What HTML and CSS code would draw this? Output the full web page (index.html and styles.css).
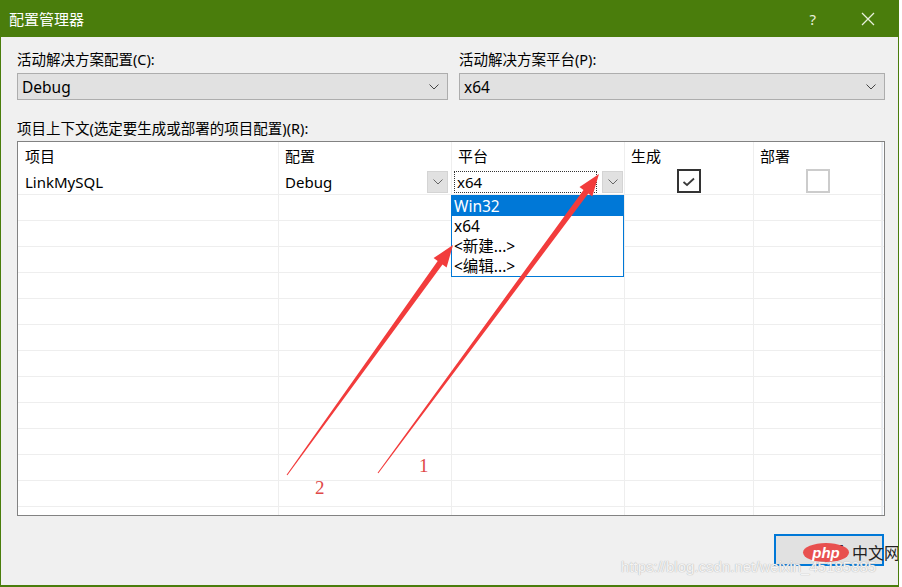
FILE: index.html
```html
<!DOCTYPE html>
<html lang="zh-CN">
<head>
    <meta charset="UTF-8">
    <title>配置管理器</title>
    <link rel="stylesheet" href="styles.css">
</head>
<body>
    <div class="window">
        <div class="titlebar">
            <span class="title">配置管理器</span>
            <span class="help">?</span>
            <svg class="close-x" width="14" height="14" viewBox="0 0 14 14">
                <path d="M1 1 L13 13 M13 1 L1 13" stroke="#e8f0dc" stroke-width="1.3" fill="none"/>
            </svg>
        </div>

        <div class="content">
            <div class="combo-row">
                <div class="field">
                    <label>活动解决方案配置(C):</label>
                    <div class="combo">
                        <span>Debug</span>
                        <svg class="chev" width="10" height="6" viewBox="0 0 10 6"><path d="M0.5 0.5 L5 5 L9.5 0.5" stroke="#444" fill="none"/></svg>
                    </div>
                </div>
                <div class="field">
                    <label>活动解决方案平台(P):</label>
                    <div class="combo">
                        <span>x64</span>
                        <svg class="chev" width="10" height="6" viewBox="0 0 10 6"><path d="M0.5 0.5 L5 5 L9.5 0.5" stroke="#444" fill="none"/></svg>
                    </div>
                </div>
            </div>

            <label class="ctx-label">项目上下文(选定要生成或部署的项目配置)(R):</label>

            <div class="grid">
                <div class="row head">
                    <div class="cell">项目</div>
                    <div class="cell">配置</div>
                    <div class="cell">平台</div>
                    <div class="cell">生成</div>
                    <div class="cell">部署</div>
                    <div class="cell edge"></div>
                </div>
                <div class="row first">
                    <div class="cell">LinkMySQL</div>
                    <div class="cell split">
                        <span>Debug</span>
                        <span class="drop-btn"><svg width="10" height="6" viewBox="0 0 10 6"><path d="M0.5 0.5 L5 5 L9.5 0.5" stroke="#666" fill="none"/></svg></span>
                    </div>
                    <div class="cell split platform">
                        <span class="focus-box">x64</span>
                        <span class="drop-btn"><svg width="10" height="6" viewBox="0 0 10 6"><path d="M0.5 0.5 L5 5 L9.5 0.5" stroke="#666" fill="none"/></svg></span>
                        <ul class="dropdown">
                            <li class="selected">Win32</li>
                            <li>x64</li>
                            <li>&lt;新建...&gt;</li>
                            <li>&lt;编辑...&gt;</li>
                        </ul>
                    </div>
                    <div class="cell center">
                        <span class="check on">
                            <svg width="20" height="20" viewBox="0 0 20 20"><path d="M4.5 11 L8 14 L15 7.5" stroke="#3a3a3a" stroke-width="1.8" fill="none"/></svg>
                        </span>
                    </div>
                    <div class="cell center"><span class="check"></span></div>
                    <div class="cell edge"></div>
                </div>
                <div class="row"><div class="cell"></div><div class="cell"></div><div class="cell"></div><div class="cell"></div><div class="cell"></div><div class="cell edge"></div></div>
                <div class="row"><div class="cell"></div><div class="cell"></div><div class="cell"></div><div class="cell"></div><div class="cell"></div><div class="cell edge"></div></div>
                <div class="row"><div class="cell"></div><div class="cell"></div><div class="cell"></div><div class="cell"></div><div class="cell"></div><div class="cell edge"></div></div>
                <div class="row"><div class="cell"></div><div class="cell"></div><div class="cell"></div><div class="cell"></div><div class="cell"></div><div class="cell edge"></div></div>
                <div class="row"><div class="cell"></div><div class="cell"></div><div class="cell"></div><div class="cell"></div><div class="cell"></div><div class="cell edge"></div></div>
                <div class="row"><div class="cell"></div><div class="cell"></div><div class="cell"></div><div class="cell"></div><div class="cell"></div><div class="cell edge"></div></div>
                <div class="row"><div class="cell"></div><div class="cell"></div><div class="cell"></div><div class="cell"></div><div class="cell"></div><div class="cell edge"></div></div>
                <div class="row"><div class="cell"></div><div class="cell"></div><div class="cell"></div><div class="cell"></div><div class="cell"></div><div class="cell edge"></div></div>
                <div class="row"><div class="cell"></div><div class="cell"></div><div class="cell"></div><div class="cell"></div><div class="cell"></div><div class="cell edge"></div></div>
                <div class="row"><div class="cell"></div><div class="cell"></div><div class="cell"></div><div class="cell"></div><div class="cell"></div><div class="cell edge"></div></div>
                <div class="row"><div class="cell"></div><div class="cell"></div><div class="cell"></div><div class="cell"></div><div class="cell"></div><div class="cell edge"></div></div>
                <div class="row"><div class="cell"></div><div class="cell"></div><div class="cell"></div><div class="cell"></div><div class="cell"></div><div class="cell edge"></div></div>
                <div class="row last"><div class="cell"></div><div class="cell"></div><div class="cell"></div><div class="cell"></div><div class="cell"></div><div class="cell edge"></div></div>
            </div>

            <div class="footer">
                <button class="btn">关闭</button>
            </div>
        </div>

        <!-- red annotation arrows drawn over the dialog -->
        <svg class="marks" width="899" height="587" viewBox="0 0 899 587">
            <polygon fill="#f23c3c" points="376.6,472.7 582.5,189.9 578.5,186.9 598,174 591.3,196.5 587.3,193.5 377.4,473.3"/>
            <polygon fill="#f23c3c" points="285.6,474.7 436.7,261.0 432.6,258.1 452,245 445.6,267.5 441.5,264.6 286.4,475.3"/>
        </svg>
        <span class="mark-num one">1</span>
        <span class="mark-num two">2</span>

        <div class="watermark">
            <span class="php">php</span>
            <span class="cn">中文网</span>
        </div>
        <div class="url">https://blog.csdn.net/weixin_45185885</div>
    </div>
</body>
</html>
```

FILE: styles.css
```css
* {
    margin: 0;
    padding: 0;
    box-sizing: border-box;
}

body {
    background: #fff;
    font-family: "Noto Sans", "Noto Sans CJK SC", sans-serif;
    color: #000;
}

.window {
    position: relative;
    width: 899px;
    height: 587px;
    background: #f0f0f0;
    border: 1px solid #4a7d0c;
    border-top: none;
    border-bottom-width: 2px;
    overflow: hidden;
}

.titlebar {
    height: 37px;
    background: #4a7d0c;
    display: flex;
    align-items: center;
    padding-left: 9px;
    margin: 0 -1px;
    color: #fff;
}

.title {
    font-size: 15px;
    flex: 1;
}

.help {
    font-size: 15px;
    color: #e8f0dc;
    margin-right: 45px;
}

.close-x {
    margin-right: 24px;
}

.content {
    padding: 12px 13px 0 16px;
}

.combo-row {
    display: flex;
    gap: 11px;
}

.field {
    flex: 1;
}

.field:first-child {
    flex: 0 0 431px;
}

label {
    display: block;
    font-size: 14.5px;
    line-height: 20px;
    height: 20px;
}

.combo {
    margin-top: 4px;
    height: 27px;
    background: #e1e1e1;
    border: 1px solid #adadad;
    display: flex;
    align-items: center;
    justify-content: space-between;
    padding: 0 8px 0 4px;
    font-size: 15.5px;
}

.ctx-label {
    margin-top: 18px;
}

.grid {
    margin-top: 3px;
    height: 375px;
    border: 1px solid #828282;
    background: #fff;
    overflow: hidden;
    font-size: 15px;
}

.row {
    display: grid;
    grid-template-columns: 261px 173px 173px 129px 128px 1fr;
    height: 26px;
    border-bottom: 1px solid #eeeeee;
}

.row.head {
    border-bottom: none;
}

.row.first {
    height: 27px;
}

.row.last {
    border-bottom: none;
}

.cell {
    border-right: 1px solid #eeeeee;
    padding: 3px 0 0 6px;
    line-height: 22px;
    position: relative;
}

.row .cell:first-child {
    padding-left: 7px;
}

.cell.edge {
    border-right: none;
    border-left: 1px solid #e6ebf2;
    padding: 0;
}

.cell.split {
    display: flex;
    align-items: flex-start;
    justify-content: space-between;
    padding-right: 3px;
}

.cell.platform {
    padding-left: 2px;
    padding-right: 1px;
}

.drop-btn {
    width: 21px;
    height: 22px;
    background: #e1e1e1;
    border: 1px solid #d4d4d4;
    display: flex;
    align-items: center;
    justify-content: center;
}

.focus-box {
    width: 143px;
    height: 22px;
    border: 1px dotted #333;
    padding-left: 2px;
    line-height: 20px;
}

.dropdown {
    position: absolute;
    left: -1px;
    top: 27px;
    width: 173px;
    height: 82px;
    list-style: none;
    background: #fff;
    border: 1px solid #0078d7;
    z-index: 2;
    font-size: 15.5px;
}

.dropdown li {
    height: 20px;
    line-height: 20px;
    padding-left: 2px;
}

.dropdown li.selected {
    background: #0078d7;
    color: #fff;
}

.cell.center {
    display: flex;
    justify-content: center;
    padding: 1px 0 0 0;
}

.check {
    width: 24px;
    height: 24px;
    border: 2px solid #cccccc;
    display: flex;
    align-items: center;
    justify-content: center;
}

.check.on {
    border-color: #333;
}

.footer {
    display: flex;
    justify-content: flex-end;
    margin-top: 18px;
    padding-right: 1px;
}

.btn {
    width: 110px;
    height: 32px;
    background: #e1e1e1;
    border: 2px solid #0078d7;
    font-family: "Noto Sans CJK SC", sans-serif;
    font-size: 15px;
    color: #000;
}

.marks {
    position: absolute;
    left: 0;
    top: 0;
    pointer-events: none;
    z-index: 3;
}

.mark-num {
    position: absolute;
    font-family: "Liberation Serif", serif;
    font-size: 19px;
    color: #e04848;
    z-index: 3;
}

.mark-num.one {
    left: 418px;
    top: 455px;
}

.mark-num.two {
    left: 314px;
    top: 477px;
}

.watermark {
    position: absolute;
    left: 802px;
    top: 543px;
    display: flex;
    align-items: center;
    gap: 3px;
    white-space: nowrap;
    z-index: 4;
}

.php {
    width: 46px;
    height: 19px;
    border-radius: 50%;
    background: #e8504f;
    color: #fff;
    font-family: "Liberation Sans", sans-serif;
    font-style: italic;
    font-weight: bold;
    font-size: 15px;
    line-height: 19px;
    text-align: center;
}

.cn {
    font-family: "Noto Sans CJK SC", sans-serif;
    font-size: 16px;
    line-height: 19px;
    color: #222;
}

.url {
    position: absolute;
    left: 620px;
    top: 558px;
    white-space: nowrap;
    font-family: "Liberation Sans", sans-serif;
    font-size: 15px;
    color: rgba(255, 255, 255, 0.85);
    text-shadow: 0 0 1px #b8b8b8, 0 0 1px #b8b8b8;
    z-index: 4;
}
```
